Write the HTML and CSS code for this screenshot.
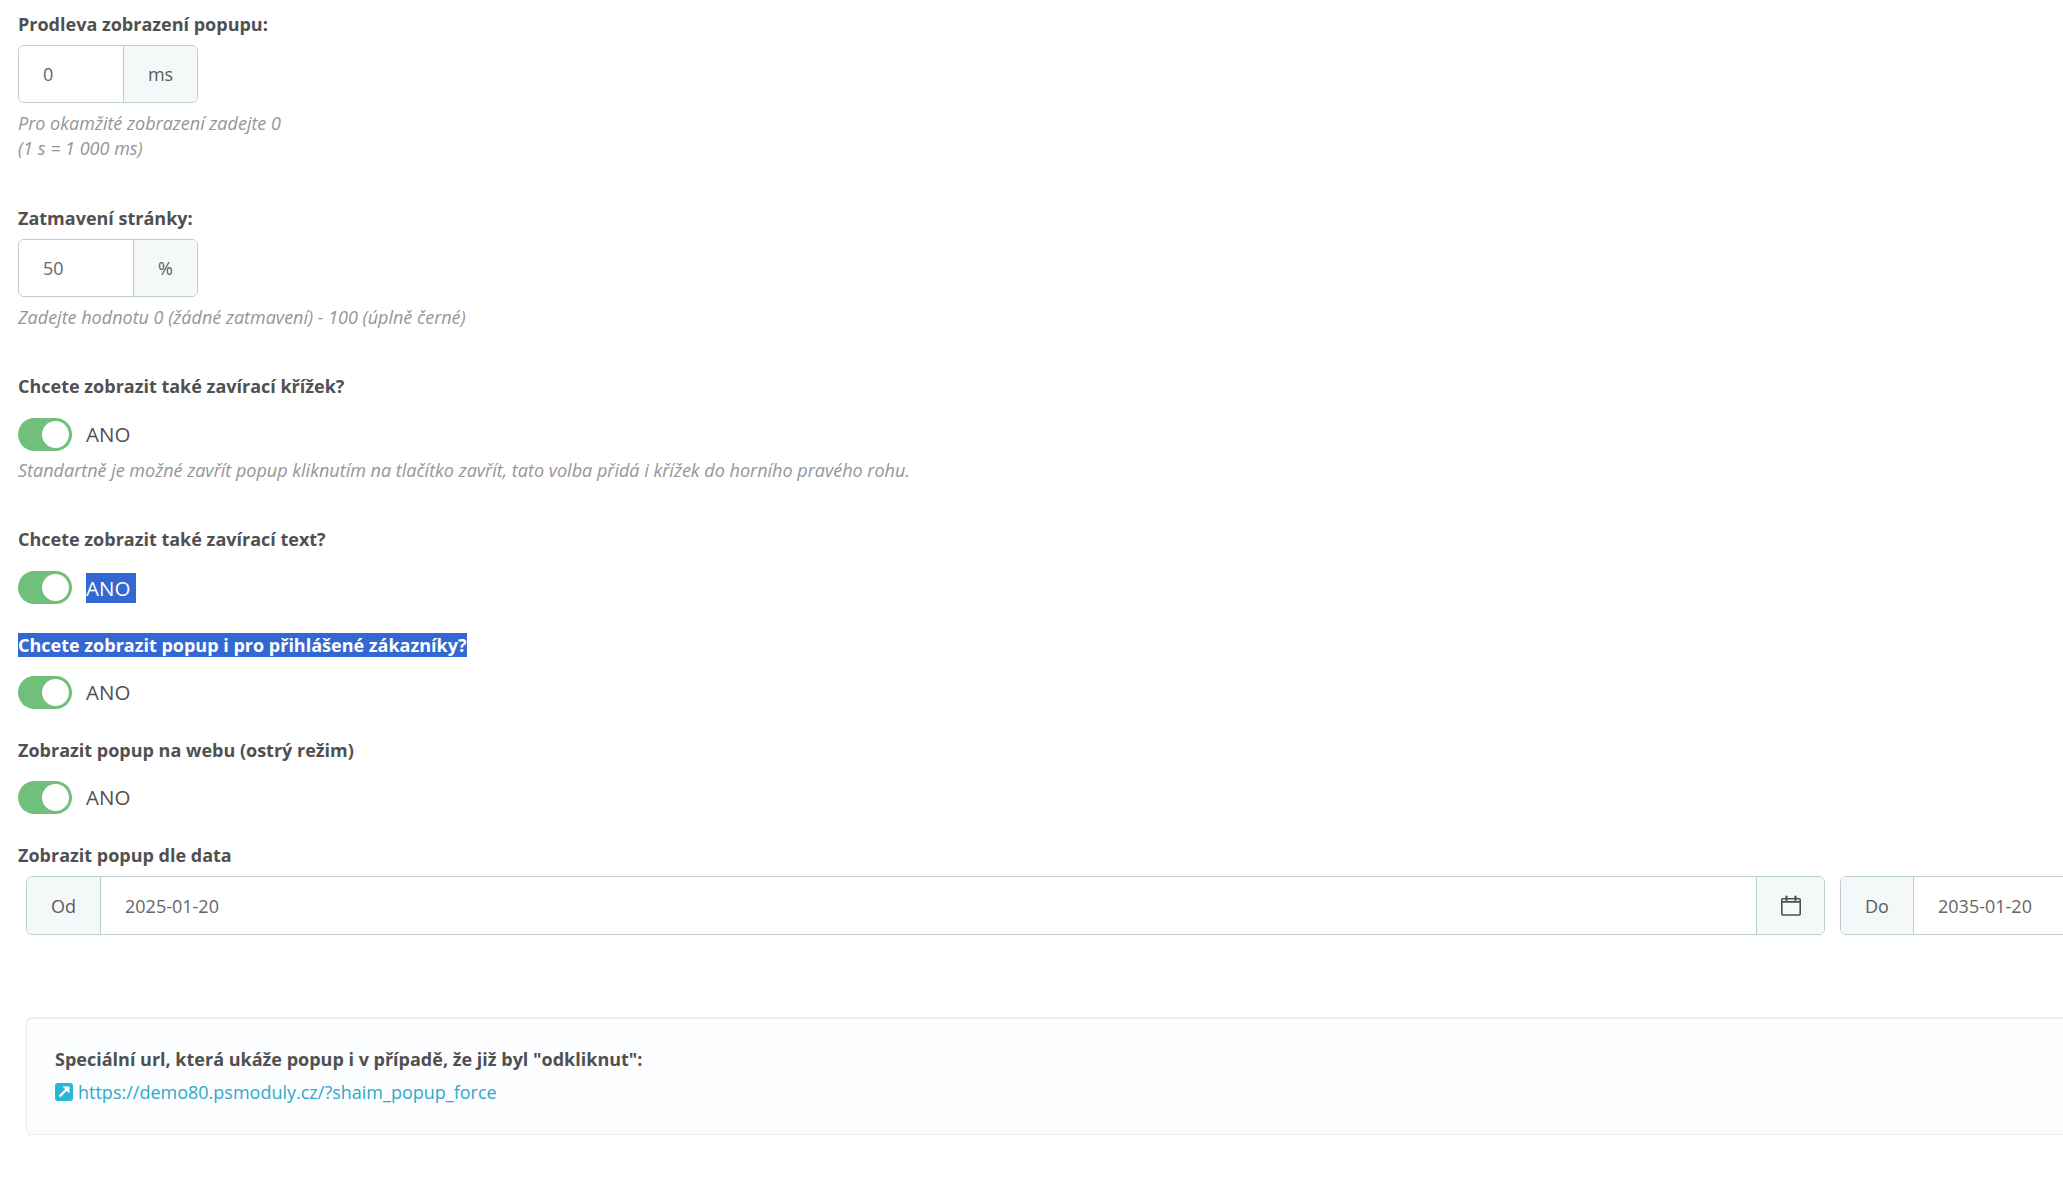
FILE: index.html
```html
<!DOCTYPE html>
<html lang="cs">
<head>
<meta charset="utf-8">
<title>Popup</title>
<link rel="stylesheet" href="styles.css">
</head>
<body>
<main class="page">
  <section class="field f-delay">
    <label class="label">Prodleva zobrazení popupu:</label>
    <div class="group g-delay"><div class="input">0</div><div class="addon">ms</div></div>
    <p class="help">Pro okamžité zobrazení zadejte 0<br>(1 s = 1 000 ms)</p>
  </section>
  <section class="field f-dim">
    <label class="label">Zatmavení stránky:</label>
    <div class="group g-dim"><div class="input">50</div><div class="addon">%</div></div>
    <p class="help">Zadejte hodnotu 0 (žádné zatmavení) - 100 (úplně černé)</p>
  </section>
  <section class="field f-cross">
    <label class="label">Chcete zobrazit také zavírací křížek?</label>
    <div class="switch-row"><span class="switch"></span><span class="switch-text">ANO</span></div>
    <p class="help help-switch">Standartně je možné zavřít popup kliknutím na tlačítko zavřít, tato volba přidá i křížek do horního pravého rohu.</p>
  </section>
  <section class="field f-text">
    <label class="label">Chcete zobrazit také zavírací text?</label>
    <div class="switch-row"><span class="switch"></span><span class="switch-text selected sel-ano">ANO</span></div>
  </section>
  <section class="field f-login">
    <label class="label"><span class="selected">Chcete zobrazit popup i pro přihlášené zákazníky?</span></label>
    <div class="switch-row"><span class="switch"></span><span class="switch-text">ANO</span></div>
  </section>
  <section class="field f-live">
    <label class="label">Zobrazit popup na webu (ostrý režim)</label>
    <div class="switch-row"><span class="switch"></span><span class="switch-text">ANO</span></div>
  </section>
  <section class="field f-date">
    <label class="label">Zobrazit popup dle data</label>
    <div class="dates">
      <div class="group date-group">
        <div class="addon addon-od">Od</div>
        <div class="input date-input">2025-01-20</div>
        <div class="addon addon-cal">
          <svg width="20" height="21" viewBox="0 0 20 21" aria-hidden="true"><path d="M1.800 3.800h16.400a1 1 0 0 1 1 1V19a1 1 0 0 1-1 1H1.800a1 1 0 0 1-1-1V4.800a1 1 0 0 1 1-1z" fill="none" stroke="#4f4f4f" stroke-width="1.600"/><path d="M1 6.800h18" stroke="#4f4f4f" stroke-width="1.800"/><path d="M5.500 1.500v3.500M14.500 1.500v3.500" stroke="#4f4f4f" stroke-width="2.200" stroke-linecap="round"/></svg>
        </div>
      </div>
      <div class="group date-group date-to">
        <div class="addon addon-do">Do</div>
        <div class="input date-input">2035-01-20</div>
      </div>
    </div>
  </section>
  <section class="card">
    <p class="card-title">Speciální url, která ukáže popup i v případě, že již byl "odkliknut":</p>
    <p class="card-link">
      <svg class="link-icon" width="18" height="18" viewBox="0 0 18 18" aria-hidden="true"><rect width="18" height="18" rx="3" fill="#25b9d7"/><path d="M4.500 13.500 11.500 6.500" stroke="#fff" stroke-width="2.400"/><path d="M7.500 3.500h7v7z" fill="#fff"/></svg><a href="#">https://demo80.psmoduly.cz/?shaim_popup_force</a>
    </p>
  </section>
</main>
</body>
</html>
```
FILE: styles.css
```css
* { box-sizing: border-box; }
html, body { margin: 0; height: 100%; overflow: hidden; background: #fff; }
body { font-family: "Open Sans", sans-serif; font-size: 18px; color: #505050; }
.page { width: 2400px; padding-left: 18px; }
p { margin: 0; }
.label { display: block; font-weight: 700; font-size: 18px; line-height: 26px; color: #505050; }
.field { display: block; }
.f-delay { padding-top: 11px; height: 205px; }
.f-dim { height: 168px; }
.f-cross { height: 153px; }
.f-text { height: 106px; }
.f-login { height: 105px; }
.f-live { height: 105px; }
.f-date { height: 175px; }
.group { display: flex; height: 58px; margin-top: 8px; border: 1px solid #bbcdd2; border-radius: 6px; overflow: hidden; }
.g-delay { width: 180px; }
.g-dim { width: 180px; }
.input { flex: 1; display: flex; align-items: center; padding-left: 24px; background: #fff; font-size: 18px; color: #666; }
.addon { display: flex; align-items: center; justify-content: center; background: #f4f8f9; border-left: 1px solid #bbcdd2; color: #5c5c5c; font-size: 18px; }
.g-delay .addon { width: 74px; }
.g-dim .addon { width: 64px; }
.help { margin-top: 8px; font-style: italic; font-size: 18px; line-height: 25px; color: #969696; }
.switch-row { display: flex; align-items: center; height: 33px; margin-top: 19px; }
.f-login .switch-row, .f-live .switch-row { margin-top: 18px; }
.switch { position: relative; width: 54px; height: 33px; border-radius: 17px; background: #70bf7b; }
.switch::after { content: ""; position: absolute; top: 3px; right: 3px; width: 27px; height: 27px; border-radius: 50%; background: #fff; }
.switch-text { margin-left: 14px; margin-bottom: 1px; font-size: 20.500px; line-height: 30px; color: #505050; }
.help-switch { margin-top: 7px; }
.selected { background: #3367d1; color: #fff; }
.sel-ano { display: inline-block; width: 50px; margin-bottom: 0; }
.dates { display: flex; gap: 15px; margin-left: 8px; }
.date-group { width: 1799px; flex: none; margin-top: 8px; height: 59px; }
.date-to { width: 400px; }
.date-group .addon:first-child { border-left: 0; border-right: 1px solid #bbcdd2; }
.addon-od { width: 74px; }
.addon-do { width: 73px; }
.addon-cal { width: 68px; }
.date-input { font-size: 18px; }
.card { width: 2300px; height: 118px; margin-left: 8px; padding: 27px 28px; background: #fbfdfe; border: 1px solid #e8eef0; border-top: 2px solid #eaeff1; border-radius: 6px; }
.card-title { font-weight: 700; font-size: 18px; line-height: 26px; }
.card-link { display: flex; align-items: center; margin-top: 7px; line-height: 26px; font-size: 18px; }
.link-icon { margin-right: 5px; }
.card-link a { color: #2eaac6; text-decoration: none; }
```
